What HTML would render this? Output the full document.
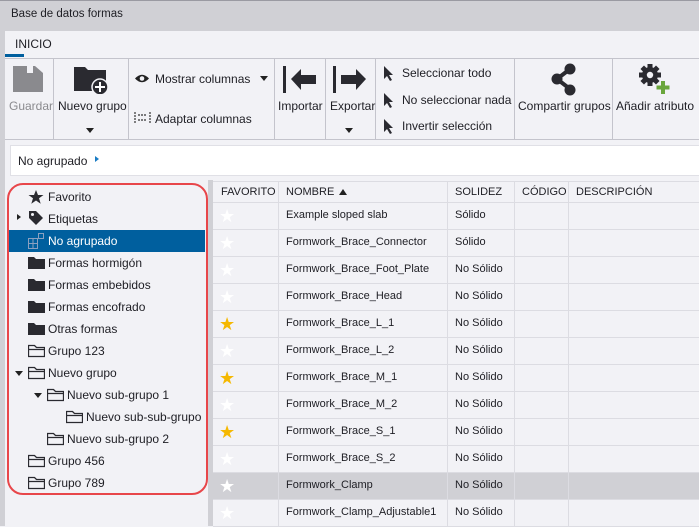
<!DOCTYPE html>
<html><head><meta charset="utf-8"><style>
*{margin:0;padding:0;box-sizing:border-box}
body{width:699px;height:526px;overflow:hidden;background:#f2f2f6;font-family:"Liberation Sans",sans-serif;font-size:12px;color:#1e1e24;position:relative}
.a{position:absolute;white-space:nowrap}
.vs{position:absolute;top:58px;height:82px;width:1px;background:#c4c4cc}
.row{position:absolute;left:213px;width:486px;height:27px;border-bottom:1px solid #dcdce2;font-size:11px}
.row span{position:absolute;top:7px}
.cl{position:absolute;top:181px;bottom:0;width:1px;background:#dcdce2}
.ti{position:absolute;height:22px;line-height:22px;white-space:nowrap}
</style></head><body>
<div class="a" style="left:0;top:0;width:699px;height:31px;background:#d0d0d5;border-top:1px solid #9a9aa2"></div>
<div class="a" style="left:11px;top:8px;font-size:11.5px">Base de datos formas</div>
<div class="a" style="left:0;top:31px;width:5px;height:495px;background:#d0d0d5"></div>
<div class="a" style="left:15px;top:37px">INICIO</div>
<div class="a" style="left:5px;top:54px;width:19px;height:3px;background:#005f9e"></div>
<div class="a" style="left:5px;top:58px;width:694px;height:1px;background:#c4c4cc"></div>
<div class="a" style="left:5px;top:139px;width:694px;height:1px;background:#c4c4cc"></div>
<div class="vs" style="left:53px"></div><div class="vs" style="left:128px"></div><div class="vs" style="left:274px"></div><div class="vs" style="left:325px"></div><div class="vs" style="left:375px"></div><div class="vs" style="left:514px"></div><div class="vs" style="left:612px"></div>
<svg class="a" style="left:13px;top:64px" width="32" height="28"><path d="M0 2h22l8 7v19H0z" fill="#8a8a8e"/><rect x="14" y="0" width="6" height="9" fill="#f2f2f6"/></svg>
<div class="a" style="left:9px;top:99px;color:#8a8a8e">Guardar</div>
<svg class="a" style="left:74px;top:64px" width="36" height="30"><path d="M0 3h11l3 3h18v21H0z" fill="#2a2a30"/><circle cx="26" cy="23" r="8" fill="#2a2a30" stroke="#f2f2f6" stroke-width="1.5"/><path d="M26 18v10M21 23h10" stroke="#fff" stroke-width="2"/></svg>
<div class="a" style="left:58px;top:99px">Nuevo grupo</div>
<div class="a" style="left:86px;top:128px;border:4px solid transparent;border-top:5px solid #222"></div>
<svg class="a" style="left:134px;top:73px" width="16" height="11"><path d="M1 5.5Q8 -2 15 5.5Q8 13 1 5.5z" fill="#222"/><circle cx="8" cy="5.5" r="2.3" fill="#f2f2f6"/></svg>
<div class="a" style="left:155px;top:72px">Mostrar columnas</div>
<div class="a" style="left:260px;top:76px;border:4px solid transparent;border-top:5px solid #222"></div>
<svg class="a" style="left:134px;top:111px" width="17" height="13"><path d="M1 1v11M16 1v11M4 4h9M4 9h9" stroke="#333" stroke-width="1.2" stroke-dasharray="2 1"/></svg>
<div class="a" style="left:155px;top:112px">Adaptar columnas</div>
<svg class="a" style="left:283px;top:66px" width="35" height="28"><rect x="0" y="0" width="3" height="27" fill="#2a2a30"/><path d="M8 13L18 3v6h15v9H18v6z" fill="#2a2a30"/></svg>
<div class="a" style="left:278px;top:99px">Importar</div>
<svg class="a" style="left:333px;top:66px" width="35" height="28"><rect x="0" y="0" width="3" height="27" fill="#2a2a30"/><path d="M33 13L23 3v6H8v9h15v6z" fill="#2a2a30"/></svg>
<div class="a" style="left:330px;top:99px">Exportar</div>
<div class="a" style="left:345px;top:128px;border:4px solid transparent;border-top:5px solid #222"></div>
<svg class="a" style="left:383px;top:65px" width="12" height="16"><path d="M1 1v13l3-3 3 5 2-1-3-5h4z" fill="#2a2a30"/></svg>
<div class="a" style="left:402px;top:66px">Seleccionar todo</div>
<svg class="a" style="left:383px;top:92px" width="12" height="16"><path d="M1 1v13l3-3 3 5 2-1-3-5h4z" fill="#2a2a30"/></svg>
<div class="a" style="left:402px;top:93px">No seleccionar nada</div>
<svg class="a" style="left:383px;top:118px" width="12" height="16"><path d="M1 1v13l3-3 3 5 2-1-3-5h4z" fill="#2a2a30"/></svg>
<div class="a" style="left:402px;top:119px">Invertir selección</div>
<svg class="a" style="left:551px;top:63px" width="26" height="34"><path d="M19 6L6 16 19 26" stroke="#2a2a30" stroke-width="4" fill="none"/><circle cx="19" cy="6" r="5.5" fill="#2a2a30"/><circle cx="6" cy="16" r="5.5" fill="#2a2a30"/><circle cx="19" cy="27" r="5.5" fill="#2a2a30"/></svg>
<div class="a" style="left:518px;top:99px">Compartir grupos</div>
<svg class="a" style="left:639px;top:64px" width="32" height="32"><g transform="translate(11,11)"><circle r="8" fill="#2a2a30"/><g fill="#2a2a30"><rect x="-2.5" y="-11" width="5" height="22"/><rect x="-11" y="-2.5" width="22" height="5"/><rect x="-2.5" y="-11" width="5" height="22" transform="rotate(45)"/><rect x="-2.5" y="-11" width="5" height="22" transform="rotate(-45)"/></g><circle r="3.2" fill="#f2f2f6"/></g><path d="M24 17v13M17.5 23.5h13" stroke="#6aa63c" stroke-width="4"/></svg>
<div class="a" style="left:616px;top:99px">Añadir atributo</div>
<div class="a" style="left:10px;top:145px;width:689px;height:31px;background:#fff;border:1px solid #e0e0e6;border-right:none"></div>
<div class="a" style="left:18px;top:154px">No agrupado</div>
<div class="a" style="left:95px;top:156px;border:3px solid transparent;border-left:4px solid #1a7cc4"></div>
<div class="a" style="left:208px;top:180px;width:5px;height:346px;background:#d0d0d5"></div>
<div class="a" style="left:9px;top:230px;width:196px;height:22px;background:#005f9e"></div>
<svg class="a" style="left:28px;top:189px" width="16" height="16"><path d="M8 1l2 5h5.5l-4.5 3.3 1.7 5.4L8 11.5l-4.7 3.2L5 9.3.5 6H6z" fill="#2a2a30"/></svg>
<div class="ti" style="left:48px;top:186px">Favorito</div>
<div class="a" style="left:17px;top:214px;border:3.5px solid transparent;border-left:4px solid #222"></div>
<svg class="a" style="left:28px;top:210px" width="16" height="16"><path d="M1 1h7l7 7-7 7-7-7z" fill="#2a2a30"/><circle cx="4.5" cy="4.5" r="1.5" fill="#f2f2f6"/></svg>
<div class="ti" style="left:48px;top:208px">Etiquetas</div>
<svg class="a" style="left:28px;top:233px" width="16" height="16"><path d="M.5 5.5h9v10h-9zM.5 10.5h9M5 5.5v10M10.5 .5h5v5h-5z" stroke="#8aa0c0" fill="none"/></svg>
<div class="ti" style="left:48px;top:230px;color:#fff">No agrupado</div>
<div id="tr"></div>
<div class="a" style="left:7px;top:183px;width:201px;height:312px;border:2px solid #e8464a;border-radius:16px"></div>
<div class="a" style="left:213px;top:181px;width:486px;height:345px;background:#f2f2f6"></div>
<div class="a" style="left:213px;top:181px;width:486px;height:22px;border-bottom:1px solid #dcdce2;border-top:1px solid #dcdce2"></div>
<div class="a" style="left:221px;top:186px;font-size:11px">FAVORITO</div>
<div class="a" style="left:286px;top:186px;font-size:11px">NOMBRE</div>
<div class="a" style="left:339px;top:189px;border:4px solid transparent;border-bottom:6px solid #222;border-top:none"></div>
<div class="a" style="left:455px;top:186px;font-size:11px">SOLIDEZ</div>
<div class="a" style="left:522px;top:186px;font-size:11px">CÓDIGO</div>
<div class="a" style="left:576px;top:186px;font-size:11px">DESCRIPCIÓN</div>
<div id="rows"></div>
<div class="cl" style="left:278px"></div><div class="cl" style="left:447px"></div><div class="cl" style="left:514px"></div><div class="cl" style="left:568px"></div>
<script>
var t=[["Formas hormigón",0,0,"f"],["Formas embebidos",0,0,"f"],["Formas encofrado",0,0,"f"],["Otras formas",0,0,"f"],["Grupo 123",0,0,"o"],["Nuevo grupo",0,1,"o"],["Nuevo sub-grupo 1",1,1,"o"],["Nuevo sub-sub-grupo",2,0,"o"],["Nuevo sub-grupo 2",1,0,"o"],["Grupo 456",0,0,"o"],["Grupo 789",0,0,"o"]];
var h="";t.forEach(function(e,i){var y=252+i*22,x=28+e[1]*19;
if(e[2])h+='<div class="a" style="left:'+(x-13)+'px;top:'+(y+9)+'px;border:4px solid transparent;border-top:5px solid #222"></div>';
h+='<svg class="a" style="left:'+x+'px;top:'+(y+4)+'px" width="17" height="14">'+(e[3]=="f"?'<path d="M0 1h6l2 2h9v10H0z" fill="#2a2a30"/>':'<path d="M.5 1.5h6l2 2h8v9H.5zM.5 5.5h16" stroke="#2a2a30" stroke-width="1.3" fill="none"/>')+'</svg>';
h+='<div class="ti" style="left:'+(x+20)+'px;top:'+y+'px">'+e[0]+'</div>';});
document.getElementById("tr").outerHTML=h;
var r=[["Example sloped slab","Sólido",0],["Formwork_Brace_Connector","Sólido",0],["Formwork_Brace_Foot_Plate","No Sólido",0],["Formwork_Brace_Head","No Sólido",0],["Formwork_Brace_L_1","No Sólido",1],["Formwork_Brace_L_2","No Sólido",0],["Formwork_Brace_M_1","No Sólido",1],["Formwork_Brace_M_2","No Sólido",0],["Formwork_Brace_S_1","No Sólido",1],["Formwork_Brace_S_2","No Sólido",0],["Formwork_Clamp","No Sólido",0],["Formwork_Clamp_Adjustable1","No Sólido",0]];
h="";r.forEach(function(e,i){var y=203+i*27;
h+='<div class="row" style="top:'+y+'px;'+(i==10?'background:#d0d0d5':'')+'"><span style="left:6px;top:3px;font-size:18px;color:'+(e[2]?'#f5b800':'#fff')+'">★</span><span style="left:73px;top:6px">'+e[0]+'</span><span style="left:242px;top:6px">'+e[1]+'</span></div>';});
document.getElementById("rows").outerHTML=h;
</script>
</body></html>
